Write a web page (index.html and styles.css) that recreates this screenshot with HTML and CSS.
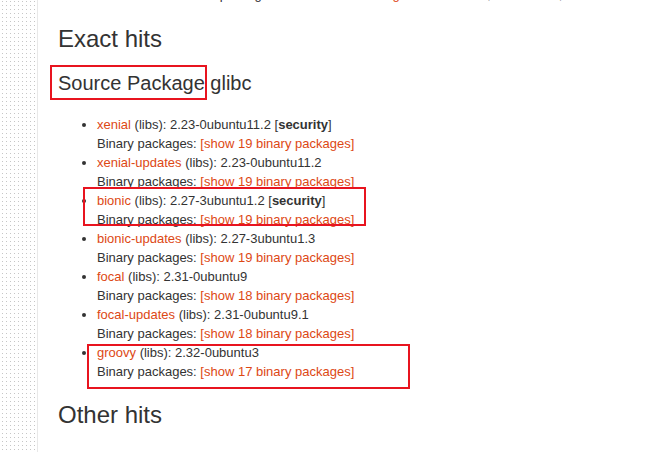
FILE: index.html
```html
<!DOCTYPE html>
<html lang="en">
<head>
<meta charset="utf-8">
<title>Package search results: glibc</title>
<link rel="stylesheet" href="styles.css">
</head>
<body>
<div class="page">
  <aside class="sidebar"></aside>
  <main class="content">
    <p class="intro">You have searched for source packages that names contain <em class="term">glibc</em> in all suites, all sections, and all architectures.</p>

    <h2 class="section-title">Exact hits</h2>
    <h3 class="pkg-title"><span class="marked marked-title">Source Package</span> glibc</h3>

    <ul class="hits">
      <li><a href="#">xenial</a> (libs): 2.23-0ubuntu11.2 [<strong>security</strong>]<br>Binary packages: <a href="#">[show 19 binary packages]</a></li>
      <li><a href="#">xenial-updates</a> (libs): 2.23-0ubuntu11.2<br>Binary packages: <a href="#">[show 19 binary packages]</a></li>
      <li class="boxed boxed-bionic"><a href="#">bionic</a> (libs): 2.27-3ubuntu1.2 [<strong>security</strong>]<br>Binary packages: <a href="#">[show 19 binary packages]</a></li>
      <li><a href="#">bionic-updates</a> (libs): 2.27-3ubuntu1.3<br>Binary packages: <a href="#">[show 19 binary packages]</a></li>
      <li><a href="#">focal</a> (libs): 2.31-0ubuntu9<br>Binary packages: <a href="#">[show 18 binary packages]</a></li>
      <li><a href="#">focal-updates</a> (libs): 2.31-0ubuntu9.1<br>Binary packages: <a href="#">[show 18 binary packages]</a></li>
      <li class="boxed boxed-groovy"><a href="#">groovy</a> (libs): 2.32-0ubuntu3<br>Binary packages: <a href="#">[show 17 binary packages]</a></li>
    </ul>

    <h2 class="section-title other">Other hits</h2>
  </main>
</div>
</body>
</html>
```

FILE: styles.css
```css
html, body {
  margin: 0;
  padding: 0;
  background: #ffffff;
}

body {
  font-family: "Liberation Sans", Arial, sans-serif;
  color: #333333;
  font-size: 13px;
  overflow: hidden;
}

.page {
  display: flex;
  min-height: 100vh;
}

.sidebar {
  flex: 0 0 37px;
  border-right: 1px solid #e8e8e8;
  background-image: conic-gradient(at 1px 1px, transparent 75%, #c6c6c6 0);
  background-size: 4px 4px;
  background-position: 2px 1px;
}

.content {
  flex: 1;
  padding-left: 20px;
}

.intro {
  margin: -15px 0 0 -14px;
  line-height: 19px;
  font-size: 13px;
  white-space: nowrap;
}

.term {
  font-style: normal;
  color: #dd4814;
}

.section-title {
  margin: 21px 0 0 0;
  font-size: 24px;
  line-height: 28px;
  font-weight: normal;
  color: #333333;
}

.section-title.other {
  margin-top: 20px;
}

.pkg-title {
  margin: 18px 0 0 0;
  font-size: 20px;
  line-height: 24px;
  font-weight: normal;
  color: #333333;
}

.marked {
  position: relative;
}

.marked-title::after {
  content: "";
  position: absolute;
  left: -8px;
  right: -2px;
  top: -7px;
  bottom: -6px;
  border: 2px solid #e8141f;
}

.hits {
  margin: 20px 0 0 0;
  padding-left: 39px;
  line-height: 19px;
  font-size: 13px;
}

.hits li {
  position: relative;
}

.hits a {
  color: #dd4814;
  text-decoration: none;
}

.hits strong {
  font-weight: bold;
  color: #333333;
}

.boxed::after {
  content: "";
  position: absolute;
  border: 2px solid #e8141f;
  pointer-events: none;
}

.boxed-bionic::after {
  left: -14px;
  top: -4px;
  width: 279px;
  height: 35px;
}

.boxed-groovy::after {
  left: -10px;
  top: 1px;
  width: 319px;
  height: 41px;
}
```
